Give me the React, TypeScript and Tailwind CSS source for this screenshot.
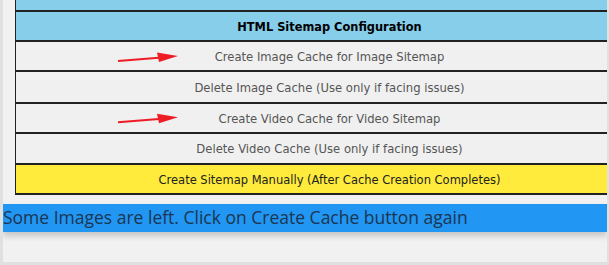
import React from "react";

const rows = [
  { label: "Create Image Cache for Image Sitemap", h: "h-[30px]" },
  { label: "Delete Image Cache (Use only if facing issues)", h: "h-[32px]" },
  { label: "Create Video Cache for Video Sitemap", h: "h-[30px]" },
  { label: "Delete Video Cache (Use only if facing issues)", h: "h-[31px]" },
];

function Arrow({ y }: { y: number }) {
  return (
    <g>
      <line x1={118} y1={y + 5} x2={162} y2={y + 1.5} stroke="#ee1c24" strokeWidth={2} />
      <polygon points={`157,${y - 3.5} 178,${y} 159,${y + 6}`} fill="#ee1c24" />
    </g>
  );
}

export default function App() {
  return (
    <div className="w-[609px] h-[265px] bg-[#e0e0e0] pl-[3px] pr-[2px] pb-[3px] font-['DejaVu_Sans',sans-serif]">
      <div className="relative h-full bg-[#f1f1f1] overflow-hidden">
        {/* table is wider than the panel and gets clipped on the right */}
        <div className="ml-[12px] w-[628px] -mt-[16px] border-l border-[#222]">
          <div className="h-[28px] bg-[#87ceeb] border-b-2 border-[#222]" />
          <div className="h-[30px] pt-[3px] bg-[#87ceeb] border-b-2 border-[#222] flex items-center justify-center text-[11.4px] font-bold text-black">
            HTML Sitemap Configuration
          </div>
          {rows.map((r) => (
            <div
              key={r.label}
              className={`${r.h} pt-[3px] bg-[#f0f0f0] border-b-2 border-[#222] flex items-center justify-center text-[11.6px] text-[#555]`}
            >
              {r.label}
            </div>
          ))}
          <div className="h-[30px] pt-[3px] bg-[#ffeb3b] border-b-2 border-[#222] flex items-center justify-center text-[11.5px] text-[#222]">
            Create Sitemap Manually (After Cache Creation Completes)
          </div>
        </div>

        <div className="mt-[9px] h-[28px] bg-[#2196f3] flex items-center shadow-[0_4px_6px_rgba(0,0,0,0.18)] font-['Open_Sans',sans-serif] text-[17.5px] text-[#1c3550] leading-none">
          Some Images are left. Click on Create Cache button again
        </div>

        <svg className="absolute top-0 -left-[3px] w-[609px] h-[265px] pointer-events-none" viewBox="0 0 609 265">
          <Arrow y={56} />
          <Arrow y={117.3} />
        </svg>
      </div>
    </div>
  );
}
